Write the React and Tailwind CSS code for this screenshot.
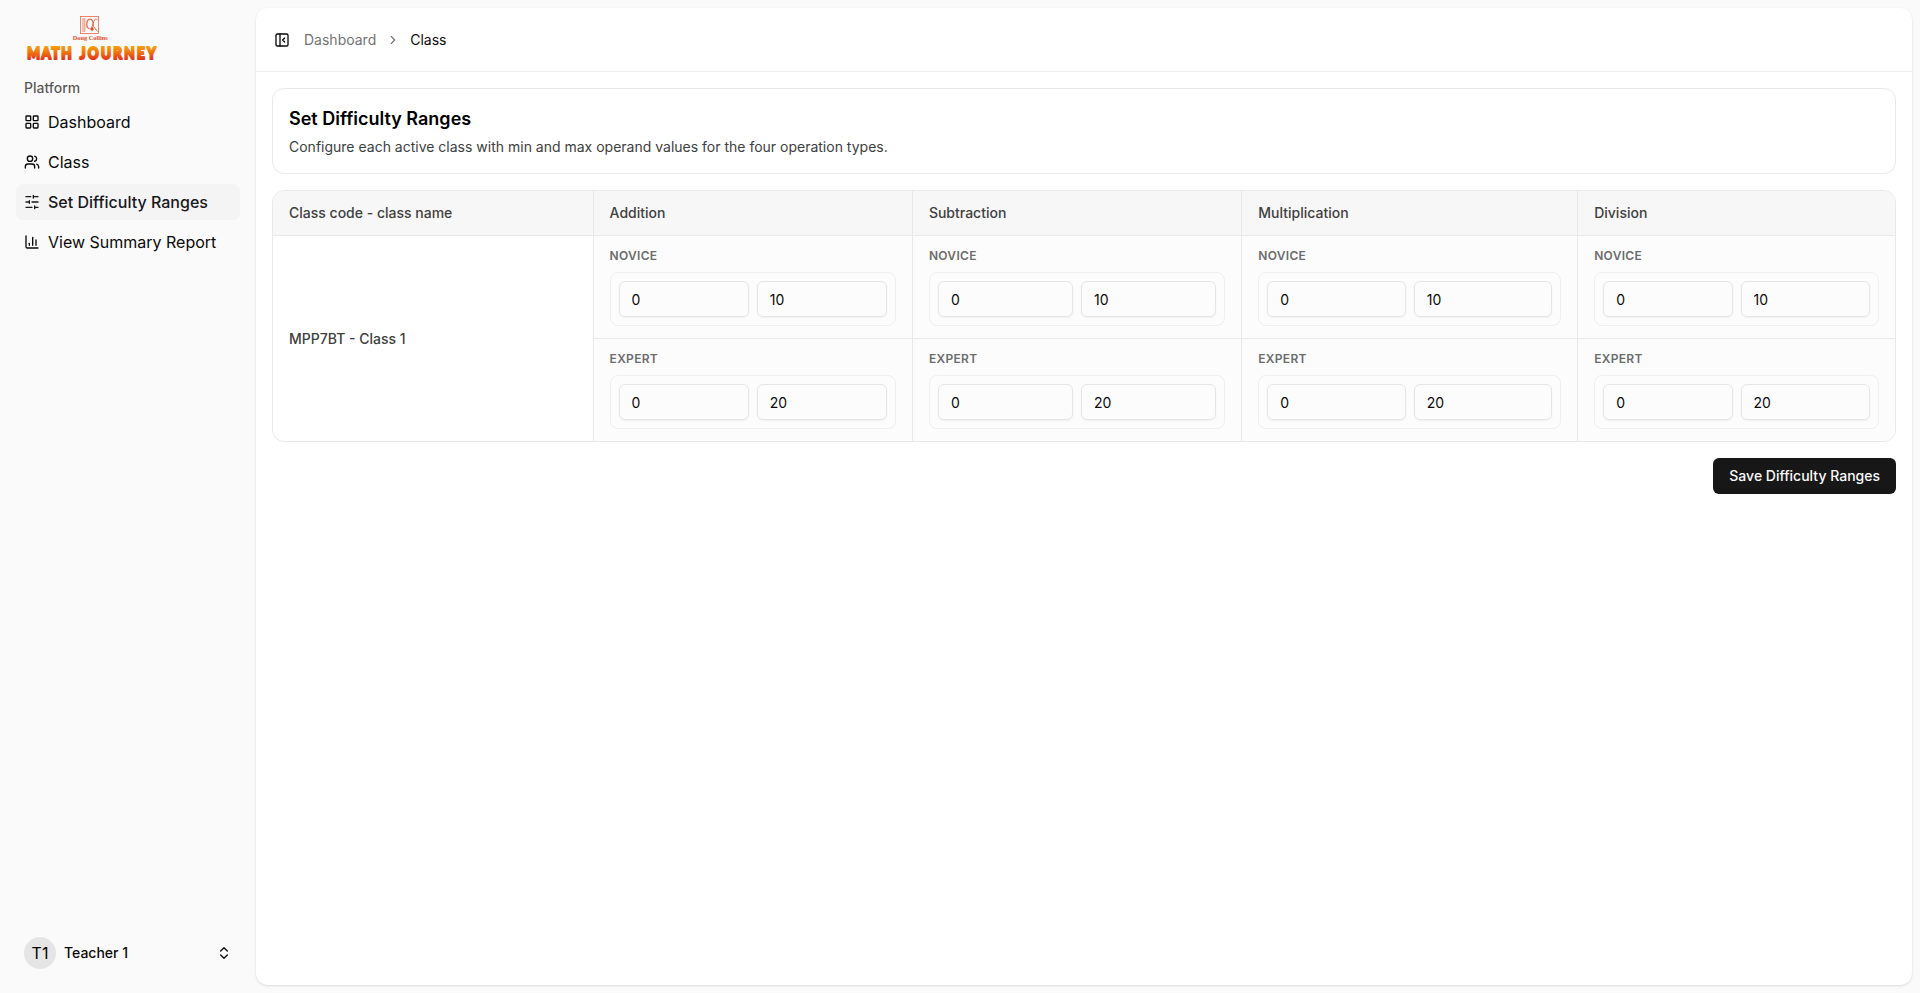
import {
  ChartColumn,
  ChevronRight,
  ChevronsUpDown,
  LayoutGrid,
  PanelLeftClose,
  Users,
} from "lucide-react";
import { useState } from "react";

function SlidersIcon({ className }) {
  return (
    <svg
      viewBox="0 0 24 24"
      fill="none"
      stroke="currentColor"
      strokeWidth="2"
      strokeLinecap="round"
      strokeLinejoin="round"
      className={className}
    >
      <path d="M21 4h-7M10 4H3M21 12h-9M8 12H3M21 20h-5M12 20H3M14 2v4M8 10v4M16 18v4" />
    </svg>
  );
}

const navItems = [
  { title: "Dashboard", icon: LayoutGrid },
  { title: "Class", icon: Users },
  { title: "Set Difficulty Ranges", icon: SlidersIcon, active: true },
  { title: "View Summary Report", icon: ChartColumn },
];

const operations = ["Addition", "Subtraction", "Multiplication", "Division"];

const levels = [
  { name: "Novice", min: 0, max: 10 },
  { name: "Expert", min: 0, max: 20 },
];

function Logo() {
  return (
    <svg width="140" height="56" viewBox="0 0 140 56">
      <defs>
        <linearGradient id="logo-fill" gradientUnits="userSpaceOnUse" x1="0" y1="38" x2="0" y2="52">
          <stop offset="0.1" stopColor="#f59a0c" />
          <stop offset="0.5" stopColor="#ef6f10" />
          <stop offset="1" stopColor="#e0301a" />
        </linearGradient>
      </defs>
      <g fill="none" stroke="#e8694a">
        <rect x="57.5" y="8.5" width="18" height="17" strokeWidth="0.8" />
        <path d="M60 10v14M61.8 10v14" strokeWidth="0.8" />
        <path d="M69.500 13c-1-2.500-4.500-2.500-5.300.500-.800 3-.300 6.500 2.300 7.500" strokeWidth="1.300" />
        <path d="M74.500 11.800c-1.500-1.200-3-.5-3.600 1.400l-2.200 6.500M69.500 12.500l1 6 4 5" strokeWidth="1" />
        <circle cx="69" cy="21" r="1.700" fill="#e2472a" stroke="none" />
      </g>
      <text
        x="49.7"
        y="31.5"
        textLength="35"
        lengthAdjust="spacingAndGlyphs"
        fill="#e04a2c"
        className="font-['Liberation_Serif',serif] text-[6.5px] font-bold"
      >
        Doug Collins
      </text>
      <g
        fill="url(#logo-fill)"
        stroke="url(#logo-fill)"
        strokeWidth="2"
        strokeLinejoin="round"
        transform="scale(0.84 1)"
        className="font-[Lato,sans-serif] text-[16px] font-black"
      >
        <text x="5" y="51" textLength="53" lengthAdjust="spacing">MATH</text>
        <text x="67.5" y="51" textLength="90.5" lengthAdjust="spacing">JOURNEY</text>
      </g>
    </svg>
  );
}

function Sidebar() {
  return (
    <aside className="flex w-64 shrink-0 flex-col p-2">
      <div className="h-16 pl-[15px]">
        <Logo />
      </div>
      <div className="flex flex-col px-2">
        <div className="flex h-8 items-center px-2 text-sm font-medium text-[#0a0a0a]/70">Platform</div>
        <nav className="flex flex-col gap-1">
          {navItems.map(({ title, icon: Icon, active }) => (
            <a
              key={title}
              href="#"
              className={`flex h-9 items-center gap-2 rounded-md px-2 text-base ${active ? "bg-[#f4f4f5] font-medium text-[#18181b]" : "text-[#0a0a0a]"}`}
            >
              <Icon className="size-4 shrink-0" />
              <span>{title}</span>
            </a>
          ))}
        </nav>
      </div>
      <button className="mx-2 mt-auto mb-2 flex h-12 items-center gap-2 px-2 text-left">
        <span className="flex size-8 items-center justify-center rounded-full bg-neutral-200 text-base text-black">T1</span>
        <span className="flex-1 text-sm font-medium">Teacher 1</span>
        <ChevronsUpDown className="size-4" />
      </button>
    </aside>
  );
}

function RangeCell({ level, last }) {
  const [min, setMin] = useState(level.min);
  const [max, setMax] = useState(level.max);
  const inputClass =
    "h-9 w-full min-w-0 rounded-md border border-neutral-200 bg-transparent px-3 py-1 text-sm shadow-xs outline-none";

  return (
    <td className={`border-[#e9e9e9] bg-[#fcfcfc] px-4 py-3 ${last ? "" : "border-r"}`}>
      <div className="mb-2 text-xs font-semibold tracking-wide text-[#6c6c6c] uppercase">{level.name}</div>
      <div className="grid grid-cols-2 gap-2 rounded-lg border border-[#efefef] p-2">
        <input className={inputClass} value={min} onChange={(e) => setMin(e.target.value)} />
        <input className={inputClass} value={max} onChange={(e) => setMax(e.target.value)} />
      </div>
    </td>
  );
}

function RangesTable() {
  return (
    <div className="overflow-hidden rounded-xl border border-[#e9e9e9]">
      <table className="w-full table-fixed border-separate border-spacing-0 text-sm">
        <colgroup>
          <col className="w-[320.6px]" />
          <col className="w-[319.3px]" />
          <col className="w-[329.4px]" />
          <col className="w-[335.9px]" />
          <col />
        </colgroup>
        <thead>
          <tr className="bg-[#f7f7f7] text-left text-[#404040]">
            <th className="border-r border-b border-[#e9e9e9] px-4 py-3 font-medium">Class code - class name</th>
            {operations.map((name, i) => (
              <th
                key={name}
                className={`border-b border-[#e9e9e9] px-4 py-3 font-medium ${i < operations.length - 1 ? "border-r" : ""}`}
              >
                {name}
              </th>
            ))}
          </tr>
        </thead>
        <tbody>
          {levels.map((level, row) => (
            <tr key={level.name} className={row === 0 ? "*:border-b" : ""}>
              {row === 0 && (
                <td rowSpan={2} className="border-r border-b-0! border-[#e9e9e9] px-4 align-middle font-medium text-[#404040]">
                  MPP7BT - Class 1
                </td>
              )}
              {operations.map((name, i) => (
                <RangeCell key={name} level={level} last={i === operations.length - 1} />
              ))}
            </tr>
          ))}
        </tbody>
      </table>
    </div>
  );
}

export default function App() {
  return (
    <div className="flex h-screen bg-[#fafafa] font-[Inter,sans-serif] text-[#0a0a0a]">
      <Sidebar />
      <main className="my-2 mr-2 flex flex-1 flex-col rounded-xl bg-white shadow-sm">
        <header className="flex h-16 shrink-0 items-center border-b border-[#f0f0f0] px-4">
          <button className="-ml-1 flex size-7 items-center justify-center">
            <PanelLeftClose className="size-4" />
          </button>
          <nav className="ml-2 flex items-center gap-2.5 text-sm">
            <a href="#" className="text-neutral-500">Dashboard</a>
            <ChevronRight className="size-3.5 text-neutral-500" />
            <span>Class</span>
          </nav>
        </header>
        <div className="flex flex-col gap-4 p-4">
          <section className="rounded-xl border border-[#e9e9e9] p-4">
            <h1 className="text-lg font-semibold text-black">Set Difficulty Ranges</h1>
            <p className="mt-1 text-sm text-[#404040]">
              Configure each active class with min and max operand values for the four operation types.
            </p>
          </section>
          <RangesTable />
          <button className="h-9 self-end rounded-md bg-[#171717] px-4 text-sm font-medium text-neutral-50">
            Save Difficulty Ranges
          </button>
        </div>
      </main>
    </div>
  );
}
